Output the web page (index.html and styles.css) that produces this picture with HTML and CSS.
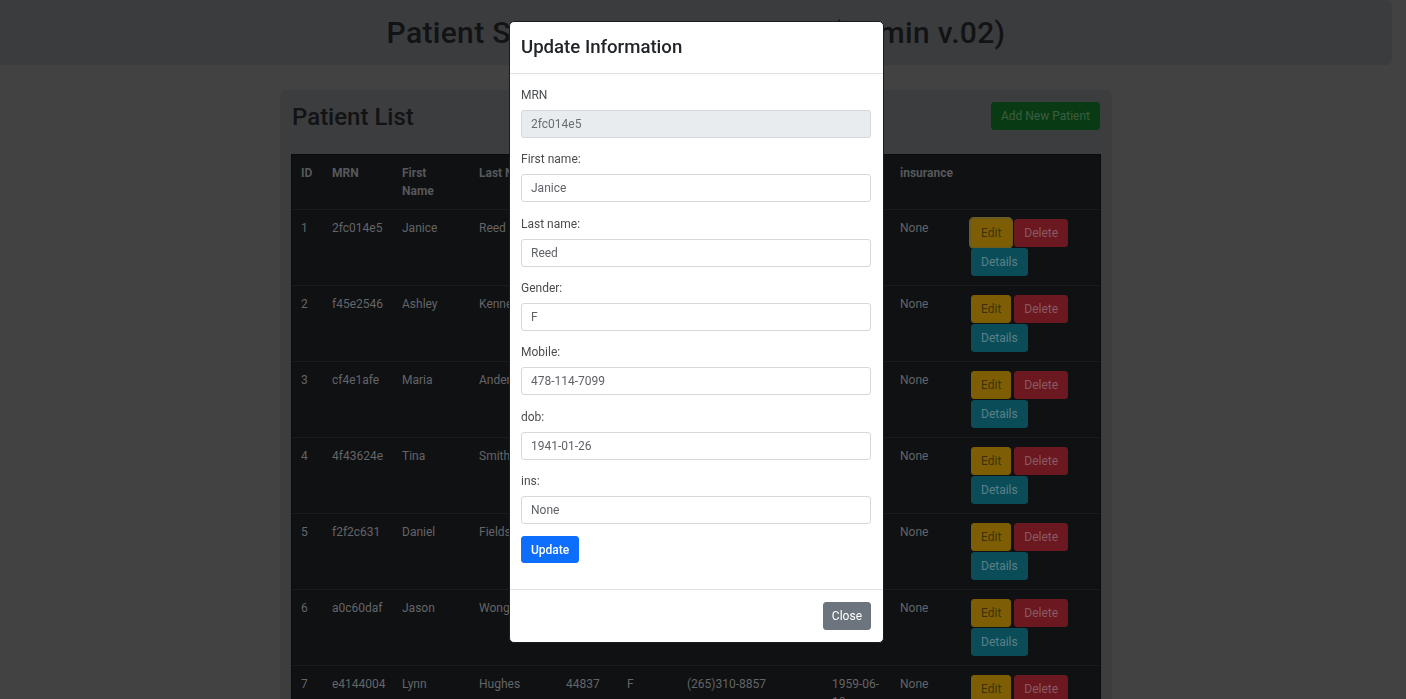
FILE: index.html
```html
<!DOCTYPE html>
<html lang="en">
<head>
<meta charset="utf-8">
<title>Patient List</title>
<link rel="stylesheet" href="styles.css">
</head>
<body>
<div class="page">
  <header class="topbar">
    <h1 class="app-title">Patient Scheduling Web System (Admin v.02)</h1>
  </header>
  <main class="card">
    <div class="card-head">
      <h2 class="card-title">Patient List</h2>
      <button class="btn btn-add">Add New Patient</button>
    </div>
    <table class="ptable">
      <colgroup>
        <col class="c-id"><col class="c-mrn"><col class="c-first"><col class="c-last"><col class="c-zip"><col class="c-gender"><col class="c-mobile"><col class="c-dob"><col class="c-ins"><col class="c-act">
      </colgroup>
      <thead>
        <tr><th>ID</th><th>MRN</th><th>First Name</th><th>Last Name</th><th>Zip</th><th>Gender</th><th>Mobile</th><th>dob</th><th>insurance</th><th></th></tr>
      </thead>
      <tbody>
        <tr><td>1</td><td>2fc014e5</td><td>Janice</td><td>Reed</td><td>30601</td><td>F</td><td>478-114-7099</td><td>1941-01-26</td><td>None</td><td><div class="actions"><button class="btn btn-edit is-focus">Edit</button><button class="btn btn-del">Delete</button><button class="btn btn-info">Details</button></div></td></tr>
        <tr><td>2</td><td>f45e2546</td><td>Ashley</td><td>Kennedy</td><td>10027</td><td>F</td><td>(212)555-0143</td><td>1987-04-12</td><td>None</td><td><div class="actions"><button class="btn btn-edit">Edit</button><button class="btn btn-del">Delete</button><button class="btn btn-info">Details</button></div></td></tr>
        <tr><td>3</td><td>cf4e1afe</td><td>Maria</td><td>Anderson</td><td>60614</td><td>F</td><td>(312)555-0178</td><td>1972-09-03</td><td>None</td><td><div class="actions"><button class="btn btn-edit">Edit</button><button class="btn btn-del">Delete</button><button class="btn btn-info">Details</button></div></td></tr>
        <tr><td>4</td><td>4f43624e</td><td>Tina</td><td>Smith</td><td>94110</td><td>F</td><td>(415)555-0192</td><td>1965-11-21</td><td>None</td><td><div class="actions"><button class="btn btn-edit">Edit</button><button class="btn btn-del">Delete</button><button class="btn btn-info">Details</button></div></td></tr>
        <tr><td>5</td><td>f2f2c631</td><td>Daniel</td><td>Fields</td><td>73301</td><td>M</td><td>(512)555-0127</td><td>1990-02-14</td><td>None</td><td><div class="actions"><button class="btn btn-edit">Edit</button><button class="btn btn-del">Delete</button><button class="btn btn-info">Details</button></div></td></tr>
        <tr><td>6</td><td>a0c60daf</td><td>Jason</td><td>Wong</td><td>98101</td><td>M</td><td>(206)555-0166</td><td>1983-07-30</td><td>None</td><td><div class="actions"><button class="btn btn-edit">Edit</button><button class="btn btn-del">Delete</button><button class="btn btn-info">Details</button></div></td></tr>
        <tr><td>7</td><td>e4144004</td><td>Lynn</td><td>Hughes</td><td>44837</td><td>F</td><td>(265)310-8857</td><td>1959-06-10</td><td>None</td><td><div class="actions"><button class="btn btn-edit">Edit</button><button class="btn btn-del">Delete</button><button class="btn btn-info">Details</button></div></td></tr>
      </tbody>
    </table>
  </main>
</div>

<div class="modal" role="dialog" aria-labelledby="modal-title">
  <div class="modal-header">
    <h4 class="modal-title" id="modal-title">Update Information</h4>
  </div>
  <div class="modal-body">
    <form class="form">
      <div class="field"><label>MRN</label><input class="input" type="text" value="2fc014e5" disabled></div>
      <div class="field"><label>First name:</label><input class="input" type="text" value="Janice"></div>
      <div class="field"><label>Last name:</label><input class="input" type="text" value="Reed"></div>
      <div class="field"><label>Gender:</label><input class="input" type="text" value="F"></div>
      <div class="field"><label>Mobile:</label><input class="input" type="text" value="478-114-7099"></div>
      <div class="field"><label>dob:</label><input class="input" type="text" value="1941-01-26"></div>
      <div class="field"><label>ins:</label><input class="input" type="text" value="None"></div>
      <button class="btn btn-primary" type="button">Update</button>
    </form>
  </div>
  <div class="modal-footer">
    <button class="btn btn-secondary" type="button">Close</button>
  </div>
</div>
</body>
</html>
```

FILE: styles.css
```css
html, body {
  margin: 0;
  padding: 0;
}

body {
  background: #424242;
  font-family: Roboto, "Noto Sans", "Liberation Sans", sans-serif;
  font-size: 12px;
  line-height: 18px;
  color: #67696b;
  overflow: hidden;
}

.page {
  width: 1392px;
}

.topbar {
  height: 65px;
  background: #3b3c3e;
  border-radius: 0 6px 6px 0;
  display: flex;
  align-items: center;
  justify-content: center;
}

.app-title {
  margin: 0;
  font-size: 30px;
  font-weight: 500;
  line-height: 36px;
  letter-spacing: 0.33px;
  color: #121314;
}

.card {
  width: 832px;
  box-sizing: border-box;
  margin: 25px auto 0;
  padding: 12px;
  background: #3c3d3f;
  border-radius: 6px;
}

.card-head {
  display: flex;
  justify-content: space-between;
  align-items: center;
  height: 28px;
  margin-bottom: 25px;
}

.card-title {
  margin: 3px 0 0;
  font-size: 24px;
  font-weight: 500;
  line-height: 29px;
  color: #121314;
}

.btn {
  font-family: inherit;
  font-size: 12px;
  line-height: 18px;
  padding: 4px 9px;
  border: 1px solid transparent;
  border-radius: 3px;
  cursor: pointer;
  white-space: nowrap;
}

.btn-add {
  height: 28px;
  background: #083b13;
  border-color: #083b13;
  color: #3d5d42;
  padding: 4px 9px;
}

/* table */
.ptable {
  width: 808px;
  table-layout: fixed;
  border-collapse: collapse;
  background: #101113;
  outline: 1px solid #0b0b0c;
}

.c-id { width: 31px; }
.c-mrn { width: 70px; }
.c-first { width: 77px; }
.c-last { width: 87px; }
.c-zip { width: 61px; }
.c-gender { width: 60px; }
.c-mobile { width: 145px; }
.c-dob { width: 68px; }
.c-ins { width: 71px; }
.c-act { width: 138px; }

.ptable th,
.ptable td {
  padding: 9px;
  text-align: left;
  vertical-align: top;
  overflow-wrap: break-word;
}

.ptable th {
  font-weight: 700;
  color: #56585b;
  border-bottom: 1px solid #1a1b1d;
}

.ptable td {
  border-top: 1px solid #1a1b1d;
  color: #636568;
}

.ptable td:nth-child(2) {
  padding-right: 5px;
}

.actions {
  display: flex;
  flex-wrap: wrap;
  column-gap: 3px;
  row-gap: 1px;
}

.btn-edit {
  background: #7d5e04;
  border-color: #7d5e04;
  color: #3f3208;
}

.btn-edit.is-focus {
  box-shadow: 0 0 0 2px #6a5a23;
}

.btn-del {
  background: #6b1820;
  border-color: #6b1820;
  color: #8a5a62;
}

.btn-info {
  background: #0a4d58;
  border-color: #0a4d58;
  color: #5c7f88;
}

/* modal */
.modal {
  position: fixed;
  top: 21px;
  left: 509px;
  width: 375px;
  box-sizing: border-box;
  background: #fff;
  border: 1px solid #1c1c1c;
  border-radius: 5px;
  color: #212529;
}

.modal-header {
  padding: 12px 12px 12px 11px;
  border-bottom: 1px solid #dee2e6;
}

.modal-title {
  margin: 0;
  font-size: 18.6px;
  font-weight: 500;
  line-height: 27px;
  color: #212529;
}

.modal-body {
  padding: 12px 12px 26px 11px;
}

.form {
  margin: 0;
}

.field {
  margin-bottom: 12.33px;
}

.field label {
  display: block;
  margin-bottom: 6px;
  font-size: 12px;
  line-height: 18px;
  color: #4a4d50;
}

.input {
  display: block;
  width: 100%;
  box-sizing: border-box;
  height: 28px;
  padding: 0 9px;
  font-family: inherit;
  font-size: 12px;
  color: #5f6266;
  background: #fff;
  border: 1px solid #d5d9de;
  border-radius: 3px;
}

.input:disabled {
  background: #e9ecef;
  color: #6a6d70;
  opacity: 1;
}

.btn-primary {
  display: block;
  height: 27px;
  margin-top: 0.7px;
  background: #0d6efd;
  border-color: #0d6efd;
  color: #fff;
  font-weight: 500;
  padding: 3.5px 9px;
}

.modal-footer {
  display: flex;
  justify-content: flex-end;
  padding: 12px;
  border-top: 1px solid #dee2e6;
}

.btn-secondary {
  height: 28px;
  padding: 4px 8px;
  background: #6c757d;
  border-color: #6c757d;
  color: #fff;
}
```
